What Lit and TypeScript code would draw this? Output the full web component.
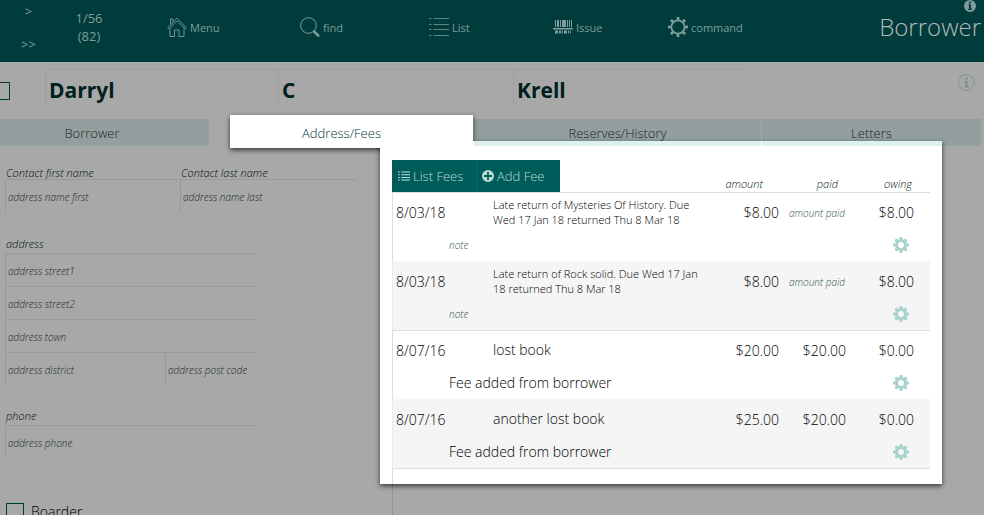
import { LitElement, html, css, svg, nothing } from "lit";
import { customElement, property } from "lit/decorators.js";

interface Fee {
  date: string;
  text: string;
  long: boolean;
  note: string;
  amount: string;
  paid: string;
  owing: string;
}

const FEES: Fee[] = [
  { date: "8/03/18", text: "Late return of Mysteries Of History. Due Wed 17 Jan 18 returned Thu 8 Mar 18", long: true, note: "", amount: "$8.00", paid: "", owing: "$8.00" },
  { date: "8/03/18", text: "Late return of Rock solid. Due Wed 17 Jan 18 returned Thu 8 Mar 18", long: true, note: "", amount: "$8.00", paid: "", owing: "$8.00" },
  { date: "8/07/16", text: "lost book", long: false, note: "Fee added from borrower", amount: "$20.00", paid: "$20.00", owing: "$0.00" },
  { date: "8/07/16", text: "another lost book", long: false, note: "Fee added from borrower", amount: "$25.00", paid: "$20.00", owing: "$0.00" },
];

const TEETH = [0, 45, 90, 135, 180, 225, 270, 315];

const ICONS = {
  home: svg`<g fill="none" stroke="currentColor" stroke-width=".9">
    <path d="M.8 10.6 10 1.2l9.2 9.400-1.300 1.200L10 3.800l-7.900 8z"/>
    <path d="M3 11.500v8h4.500v-6.500h4.500v6.500H17v-8"/>
    <path d="M3.500 7.500v-5.500h2.500v3"/></g>`,
  search: svg`<circle cx="8.500" cy="8.500" r="7.800" fill="none" stroke="currentColor" stroke-width="1"/>
    <path d="m14.200 14.600 4 3.900" stroke="currentColor" stroke-width="2.600" stroke-linecap="round"/>`,
  lines: svg`<path d="M0 1.500h2.500M4.500 1.500H20M0 7.500h2.500M4.500 7.500H20M0 12.500h2.500M4.500 12.500H20M0 18.500h2.500M4.500 18.500H20" stroke="currentColor" stroke-width="1" opacity=".75"/>`,
  barcode: svg`<path fill="currentColor" d="M2 3h1v7H2zM4 3h2v7H4zM7 3h1v7H7zM9 3h4v7H9zM14 3h1v7h-1zM16 3h1v7h-1zM18 3h1v7h-1zM0 11h20v1.500H0zM2 13.500h3v3H2zM6 13.500h2v3H6zM9 13.500h1v3H9zM11 13.500h3v3h-3zM15 13.500h1v3h-1zM17 13.500h1v3h-1z"/>`,
  cog: svg`<circle cx="10" cy="10" r="6.700" fill="none" stroke="currentColor" stroke-width="1.800"/>
    ${TEETH.map((a) => svg`<path d="M8.500 0h3l-.4 3.300H8.900z" fill="currentColor" transform="rotate(${a} 10 10)"/>`)}`,
  gear: svg`<circle cx="10" cy="10" r="5.600" fill="none" stroke="currentColor" stroke-width="4"/>
    ${TEETH.map((a) => svg`<path d="M8.400 0h3.200l.6 3.500H7.800z" fill="currentColor" transform="rotate(${a} 10 10)"/>`)}`,
  bullets: svg`<path d="M0 2.500h3v1.700H0zM5.500 2.500H20v1.700H5.500zM0 7h3v1.700H0zM5.500 7H20v1.700H5.500zM0 11.500h3v1.700H0zM5.500 11.500H20v1.700H5.500zM0 16h3v1.700H0zM5.500 16H20v1.700H5.500z" fill="currentColor"/>`,
  plus: svg`<path fill="currentColor" fill-rule="evenodd" d="M10 0a10 10 0 1 0 0 20 10 10 0 0 0 0-20zM8.500 3.500h3v5h5v3h-5v5h-3v-5h-5v-3h5z"/>`,
  info: svg`<path fill="currentColor" fill-rule="evenodd" d="M10 0a10 10 0 1 0 0 20 10 10 0 0 0 0-20zM8.300 3h3.400v3H8.300zM7 7.500h4.700v7H13V16.500H7v-2h1.300v-5H7z"/>`,
  infoRing: svg`<circle cx="10" cy="10" r="9.300" fill="none" stroke="currentColor" stroke-width="1"/>
    <path fill="currentColor" d="M8.700 4h2.600v2.400H8.700zM7.300 8h4v6.500h1.400v1.300H7.300v-1.300h1.400V9.300H7.300z"/>`,
};

type IconName = keyof typeof ICONS;

@customElement("ui-icon")
export class UiIcon extends LitElement {
  @property() name: IconName = "info";

  static styles = css`
    :host { display: block; flex: none; width: 20px; height: 20px; }
    .glyph { display: block; width: 100%; height: 100%; }
  `;

  render() {
    return html`<svg class="glyph" viewBox="0 0 20 20" aria-hidden="true">${ICONS[this.name]}</svg>`;
  }
}

@customElement("fee-table")
export class FeeTable extends LitElement {
  static styles = css`
    :host { display: block; }
    .fees {
      width: 100%;
      table-layout: fixed;
      border-collapse: separate;
      border-spacing: 0;
      font: 300 14px/20px "Open Sans", sans-serif;
      color: #000;
    }
    .c-date { width: 57px; }
    .c-gap { width: 44px; }
    .c-amount { width: 71px; }
    .c-paid { width: 67px; }
    .c-owing { width: 84px; }
    td, th { box-sizing: border-box; padding: 0; vertical-align: top; font-weight: 300; }
    .bar { display: flex; }
    .action {
      display: flex;
      align-items: center;
      gap: 3px;
      width: 84px;
      height: 32px;
      padding: 0 0 0 6px;
      border: 0;
      background: #005c5a;
      color: #b8dcd8;
      font: 300 13px/20px "Open Sans", sans-serif;
      white-space: nowrap;
    }
    .action + .action { border-left: 1px solid #006e6c; padding-left: 5px; }
    .small { width: 12px; height: 12px; }
    .head {
      vertical-align: bottom;
      text-align: right;
      font-style: italic;
      font-size: 11px;
      line-height: 16px;
      color: #002225;
    }
    .h-amount { padding-right: 16px; }
    .h-paid { padding-right: 8px; }
    .h-owing { padding-right: 18px; }
    .main td { height: 36px; }
    .sub td { height: 33px; padding-top: 1px; vertical-align: middle; }
    .odd .main td { border-top: 1px solid #ddd; }
    .even .main td { border-top: 1px solid #f5f5f5; }
    .even td { background: #f5f5f5; }
    .last .sub td { height: 34px; border-bottom: 1px solid #ddd; }
    .main .date { padding: 10px 0 0 3px; border-left: 1px solid #ddd; }
    .edge { border-left: 1px solid #ddd; }
    .even .main .date, .even .edge { border-left-color: #ebebeb; }
    .desc { padding-top: 9px; }
    .desc.long { padding-top: 4px; font-size: 11px; line-height: 15px; }
    .num { padding-top: 10px; text-align: right; }
    .num.owing { padding-right: 16px; }
    .edit {
      display: block;
      box-sizing: border-box;
      width: 100%;
      height: 20px;
      margin: 0;
      padding: 0;
      border: 0;
      background: transparent;
      color: #000;
      font: 300 14px/20px "Open Sans", sans-serif;
    }
    .edit.empty { font-size: 10px; }
    .edit.right { text-align: right; }
    .edit.empty.right { padding-right: 1px; }
    .edit::placeholder { color: #365454; opacity: 1; font-style: italic; }
    .cog {
      display: block;
      width: 16px;
      height: 16px;
      margin: 0 21px 0 auto;
      padding: 0;
      border: 0;
      background: transparent;
      color: #a9d2cd;
    }
    .cog ui-icon { width: 16px; height: 16px; }
  `;

  private edit(text: string, value: string, align = "") {
    return html`<input class="edit ${align} ${value ? "" : "empty"}" aria-label=${text} placeholder=${text} .value=${value} />`;
  }

  private row(fee: Fee, i: number) {
    const cls = `${i % 2 ? "even" : "odd"} ${i === FEES.length - 1 ? "last" : ""}`;
    return html`<tbody class=${cls}>
      <tr class="main">
        <td class="date" colspan="2">${fee.date}</td>
        <td class="desc ${fee.long ? "long" : ""}">${fee.text}</td>
        <td class="num">${fee.amount}</td>
        <td class="num">${this.edit("amount paid", fee.paid, "right")}</td>
        <td class="num owing">${fee.owing}</td>
      </tr>
      <tr class="sub">
        <td class="edge"></td>
        <td colspan="4">${this.edit("note", fee.note)}</td>
        <td><button class="cog" aria-label="Fee options"><ui-icon name="gear"></ui-icon></button></td>
      </tr>
    </tbody>`;
  }

  render() {
    return html`<table class="fees">
      <colgroup>
        <col class="c-date" /><col class="c-gap" /><col /><col class="c-amount" /><col class="c-paid" /><col class="c-owing" />
      </colgroup>
      <thead>
        <tr>
          <td colspan="3">
            <div class="bar">
              <button class="action"><ui-icon class="small" name="bullets"></ui-icon>List Fees</button>
              <button class="action"><ui-icon class="small" name="plus"></ui-icon>Add Fee</button>
            </div>
          </td>
          <th class="head h-amount" scope="col">amount</th>
          <th class="head h-paid" scope="col">paid</th>
          <th class="head h-owing" scope="col">owing</th>
        </tr>
      </thead>
      ${FEES.map((fee, i) => this.row(fee, i))}
    </table>`;
  }
}

@customElement("app-root")
export class AppRoot extends LitElement {
  static styles = css`
    :host {
      display: flex;
      flex-direction: column;
      height: 100vh;
      overflow: hidden;
      background: #a8a8a8;
      font: 300 14px/20px "Open Sans", sans-serif;
      color: #001f1f;
    }
    button, input { margin: 0; font: inherit; color: inherit; }
    button { padding: 0; border: 0; background: transparent; white-space: nowrap; }

    .top {
      flex: none;
      display: flex;
      height: 62px;
      background: #003c3c;
      color: #7f9d9b;
    }
    .steps {
      flex: none;
      display: flex;
      flex-direction: column;
      justify-content: space-between;
      align-items: center;
      width: 57px;
      padding: 1px 0 8px;
      box-sizing: border-box;
      font-size: 13px;
      font-weight: 400;
    }
    .count { flex: none; width: 64px; padding-top: 9px; text-align: center; line-height: 18px; font-weight: 400; font-size: 13px; }
    .nav {
      flex: 1;
      display: grid;
      grid-template-columns: 133fr 129fr 124fr 115fr 110fr;
      padding: 17px 0 0 46px;
    }
    .item { display: flex; align-items: center; gap: 3px; height: 20px; font-size: 11px; font-weight: 400; }
    .caption { padding-top: 2px; }
    .title {
      flex: none;
      display: flex;
      flex-direction: column;
      align-items: flex-end;
      box-sizing: border-box;
      width: 206px;
      padding-right: 3px;
    }
    .title ui-icon { width: 12px; height: 12px; margin-right: 5px; }
    .heading { margin: 0; font-size: 24px; line-height: 30px; font-weight: 300; color: #b8b8b8; }

    .person { flex: none; display: flex; height: 57px; }
    .tick {
      appearance: none;
      flex: none;
      box-sizing: border-box;
      width: 18px;
      height: 18px;
      border: 1px solid #003c3c;
      border-radius: 0;
    }
    .person .tick { margin: 20px 35px 0 -8px; }
    .names { display: grid; grid-template-columns: 233fr 235fr 233fr; flex: 1; padding-top: 7px; }
    .name {
      box-sizing: border-box;
      width: 100%;
      height: 38px;
      padding: 2px 3px 0;
      border: solid #9f9f9f;
      border-width: 1px 0 0 1px;
      border-radius: 0;
      background: transparent;
      font-size: 21px;
      font-weight: 700;
      color: #002020;
    }
    .about { flex: none; width: 238px; }
    .about ui-icon { width: 17px; height: 17px; margin: 12px 9px 0 auto; color: #76908e; }

    .tabs { flex: none; display: grid; grid-template-columns: 209fr 264fr 288fr 220fr; padding-right: 3px; height: 27px; }
    .tab { background: #939f9f; color: #1c2323; font-size: 13px; height: 27px; }
    .tab.first { padding-right: 25px; }
    .tab.mid { margin-left: 1px; }
    .tab.active {
      position: relative;
      height: 33px;
      margin: -4px 0 0 21px;
      background: #fff;
      box-shadow: 0 2px 5px rgba(0, 0, 0, 0.7);
      color: #003534;
    }
    .face {
      position: relative;
      z-index: 3;
      display: block;
      box-sizing: border-box;
      height: 33px;
      padding: 8px 20px 0 0;
      background: #fff;
    }

    .body { flex: 1; display: grid; grid-template-columns: 380px 1fr; }
    .form { padding: 19px 0 0 5px; }
    .group { display: grid; }
    .contact { grid-template-columns: 175px 177px; margin-bottom: 24px; }
    .address { grid-template-columns: 160px 93px; margin-bottom: 23px; }
    .phone { grid-template-columns: 253px; margin-bottom: 44px; }
    .label { height: 17px; padding-left: 1px; line-height: 16px; font-size: 11px; font-style: italic; color: #001010; }
    .contact .label { height: 14px; }
    .wide { grid-column: 1 / -1; }
    .field {
      box-sizing: border-box;
      width: 100%;
      height: 33px;
      padding: 2px 0 0 2px;
      border: solid #999;
      border-width: 1px 0 0 1px;
      border-radius: 0;
      background: transparent;
      font-size: 10px;
    }
    .field::placeholder { color: #172a2a; opacity: 1; font-style: italic; }
    .check { display: flex; align-items: center; gap: 7px; padding-left: 1px; color: #000; }

    .side { display: flex; flex-direction: column; margin: -5px 42px 0 0; }
    .panel {
      position: relative;
      z-index: 2;
      padding: 0 12px;
      background: #fff;
      box-shadow: 0 2px 5px rgba(0, 0, 0, 0.7);
    }
    .strip { display: grid; grid-template-columns: 287fr 180fr; gap: 1px; height: 5px; margin: 0 -12px 14px 82px; }
    .strip-part { background: #dff0f0; }
    .tail { height: 15px; border-left: 1px solid #ddd; }
    .rule { flex: 1; margin-left: 12px; border-left: 1px solid #929292; }
  `;

  private field(id: string, text: string, wide = true) {
    return html`<input class="field ${wide ? "wide" : ""}" id=${id || nothing} aria-label=${text} placeholder=${text} />`;
  }

  private item(icon: IconName, text: string) {
    return html`<button class="item"><ui-icon name=${icon}></ui-icon><span class="caption">${text}</span></button>`;
  }

  render() {
    return html`
      <header class="top">
        <div class="steps"><button>&gt;</button><button>&gt;&gt;</button></div>
        <div class="count">1/56<br />(82)</div>
        <nav class="nav">
          ${this.item("home", "Menu")} ${this.item("search", "find")} ${this.item("lines", "List")}
          ${this.item("barcode", "Issue")} ${this.item("cog", "command")}
        </nav>
        <div class="title">
          <ui-icon name="info"></ui-icon>
          <h1 class="heading">Borrower</h1>
        </div>
      </header>

      <section class="person">
        <input class="tick" type="checkbox" aria-label="Select borrower" />
        <div class="names">
          <input class="name" aria-label="First name" .value=${"Darryl"} />
          <input class="name" aria-label="Initial" .value=${"C"} />
          <input class="name" aria-label="Last name" .value=${"Krell"} />
        </div>
        <div class="about"><ui-icon name="infoRing"></ui-icon></div>
      </section>

      <nav class="tabs">
        <button class="tab first">Borrower</button>
        <button class="tab active"><span class="face">Address/Fees</span></button>
        <button class="tab mid">Reserves/History</button>
        <button class="tab mid">Letters</button>
      </nav>

      <main class="body">
        <form class="form">
          <div class="group contact">
            <label class="label" for="first">Contact first name</label>
            <label class="label" for="last">Contact last name</label>
            ${this.field("first", "address name first", false)} ${this.field("last", "address name last", false)}
          </div>
          <div class="group address">
            <label class="label wide" for="street">address</label>
            ${this.field("street", "address street1")} ${this.field("", "address street2")}
            ${this.field("", "address town")} ${this.field("", "address district", false)}
            ${this.field("", "address post code", false)}
          </div>
          <div class="group phone">
            <label class="label" for="phone">phone</label>
            ${this.field("phone", "address phone")}
          </div>
          <label class="check"><input class="tick" type="checkbox" />Boarder</label>
        </form>
        <div class="side">
          <section class="panel">
            <div class="strip"><div class="strip-part"></div><div class="strip-part"></div></div>
            <fee-table></fee-table>
            <div class="tail"></div>
          </section>
          <div class="rule"></div>
        </div>
      </main>
    `;
  }
}
